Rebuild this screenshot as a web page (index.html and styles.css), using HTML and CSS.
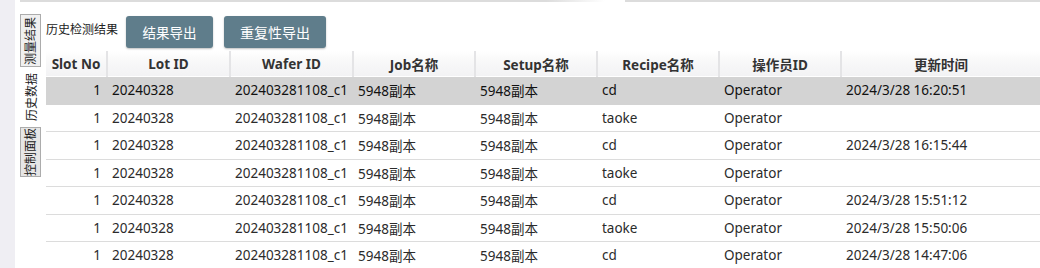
FILE: index.html
```html
<!DOCTYPE html>
<html lang="zh-CN">

<head>
    <meta charset="UTF-8">
    <meta name="viewport" content="width=device-width, initial-scale=1.0">
    <title>历史数据</title>
    <link rel="stylesheet" href="styles.css">
</head>

<body>

    <div class="app">
        <div class="sidebar"></div>

        <div class="main">
            <div class="top-line">
                <span class="seg seg-left"></span>
                <span class="seg seg-right"></span>
            </div>
            <div class="band"></div>

            <div class="panel">
                <div class="tabs">
                    <div class="tab tab-first">测量结果</div>
                    <div class="tab tab-active">历史数据</div>
                    <div class="tab tab-last">控制面板</div>
                </div>

                <div class="content">
                    <div class="toolbar">
                        <span class="title">历史检测结果</span>
                        <button class="btn btn-result">结果导出</button>
                        <button class="btn btn-repeat">重复性导出</button>
                    </div>

                    <table class="grid">
                        <colgroup>
                            <col style="width: 61px">
                            <col style="width: 123px">
                            <col style="width: 123px">
                            <col style="width: 122px">
                            <col style="width: 122px">
                            <col style="width: 122px">
                            <col style="width: 122px">
                            <col>
                        </colgroup>
                        <thead>
                            <tr>
                                <th>Slot No</th>
                                <th>Lot ID</th>
                                <th>Wafer ID</th>
                                <th>Job名称</th>
                                <th>Setup名称</th>
                                <th>Recipe名称</th>
                                <th>操作员ID</th>
                                <th class="last">更新时间</th>
                            </tr>
                        </thead>
                        <tbody>
                            <tr class="selected">
                                <td class="num">1</td>
                                <td>20240328</td>
                                <td>202403281108_c1</td>
                                <td>5948副本</td>
                                <td>5948副本</td>
                                <td>cd</td>
                                <td>Operator</td>
                                <td>2024/3/28 16:20:51</td>
                            </tr>
                            <tr>
                                <td class="num">1</td>
                                <td>20240328</td>
                                <td>202403281108_c1</td>
                                <td>5948副本</td>
                                <td>5948副本</td>
                                <td>taoke</td>
                                <td>Operator</td>
                                <td></td>
                            </tr>
                            <tr>
                                <td class="num">1</td>
                                <td>20240328</td>
                                <td>202403281108_c1</td>
                                <td>5948副本</td>
                                <td>5948副本</td>
                                <td>cd</td>
                                <td>Operator</td>
                                <td>2024/3/28 16:15:44</td>
                            </tr>
                            <tr>
                                <td class="num">1</td>
                                <td>20240328</td>
                                <td>202403281108_c1</td>
                                <td>5948副本</td>
                                <td>5948副本</td>
                                <td>taoke</td>
                                <td>Operator</td>
                                <td></td>
                            </tr>
                            <tr>
                                <td class="num">1</td>
                                <td>20240328</td>
                                <td>202403281108_c1</td>
                                <td>5948副本</td>
                                <td>5948副本</td>
                                <td>cd</td>
                                <td>Operator</td>
                                <td>2024/3/28 15:51:12</td>
                            </tr>
                            <tr>
                                <td class="num">1</td>
                                <td>20240328</td>
                                <td>202403281108_c1</td>
                                <td>5948副本</td>
                                <td>5948副本</td>
                                <td>taoke</td>
                                <td>Operator</td>
                                <td>2024/3/28 15:50:06</td>
                            </tr>
                            <tr>
                                <td class="num">1</td>
                                <td>20240328</td>
                                <td>202403281108_c1</td>
                                <td>5948副本</td>
                                <td>5948副本</td>
                                <td>cd</td>
                                <td>Operator</td>
                                <td>2024/3/28 14:47:06</td>
                            </tr>
                        </tbody>
                    </table>
                </div>
            </div>
        </div>
    </div>

</body>

</html>
```

FILE: styles.css
```css
body {
    margin: 0;
    width: 1040px;
    height: 268px;
    overflow: hidden;
    background-color: #fff;
    font-family: 'Noto Sans', 'Noto Sans CJK SC', sans-serif;
    color: #333;
}

.app {
    display: flex;
    height: 268px;
}

.sidebar {
    width: 15px;
    background-color: #efeef3;
}

.main {
    flex: 1;
    display: flex;
    flex-direction: column;
    padding-left: 5px;
}

.top-line {
    display: flex;
    gap: 20px;
    height: 2px;
}

.seg {
    display: block;
    height: 2px;
    background-color: #dcdcdc;
}

.seg-left {
    width: 585px;
    background: linear-gradient(to right, #dcdcdc 90%, #fff);
}

.seg-right {
    flex: 1;
}

.band {
    height: 4px;
    margin-top: 4px;
    background-color: #ededed;
}

.panel {
    display: flex;
    margin-top: 8px;
}

.tabs {
    width: 21px;
    display: flex;
    flex-direction: column;
}

.tab {
    writing-mode: vertical-rl;
    text-orientation: sideways;
    transform: rotate(180deg);
    font-size: 12px;
    line-height: 19px;
    text-align: center;
    color: #222;
    box-sizing: border-box;
}

.tab-first {
    height: 53px;
    border: 1px solid #acacac;
    background-color: #f0f0f0;
}

.tab-active {
    height: 60px;
    margin-left: 2px;
    width: 19px;
}

.tab-last {
    height: 50px;
    border: 1px solid #acacac;
    background-color: #e6e6e6;
}

.content {
    flex: 1;
    padding-left: 5px;
}

.toolbar {
    display: flex;
    align-items: flex-start;
    height: 32px;
    margin-top: 2px;
}

.title {
    font-size: 12px;
    line-height: 28px;
    color: #222;
    margin-right: 8px;
}

.btn {
    height: 32px;
    padding: 0;
    border: none;
    border-radius: 3px;
    background-color: #5f7d8b;
    color: #fff;
    font-family: inherit;
    font-size: 13.5px;
    box-shadow: 0 1px 2px rgba(0, 0, 0, 0.25);
}

.btn-result {
    width: 87px;
}

.btn-repeat {
    width: 102px;
    margin-left: 11px;
    font-size: 14px;
}

.grid {
    margin-top: 3px;
    width: 994px;
    table-layout: fixed;
    border-collapse: collapse;
    font-size: 13.5px;
}

.grid th {
    height: 25px;
    padding: 0;
    font-weight: bold;
    color: #333;
    text-align: center;
    background: linear-gradient(#fff 0%, #fafafa 30%, #f2f2f4 100%);
    border-right: 2px solid #e4e4e6;
    border-bottom: 1px solid #fff;
}

.grid th.last {
    border-right: none;
}

.grid td {
    height: 26.5px;
    padding: 0 0 0 5px;
    white-space: nowrap;
    overflow: hidden;
    border-bottom: 1px solid #dcdcdc;
    color: #2b2b2b;
}

.grid td.num {
    text-align: right;
    padding: 0 6px 0 0;
}

.grid tr.selected td {
    background-color: #d3d3d3;
    border-bottom-color: #d3d3d3;
    color: #111;
}
```
